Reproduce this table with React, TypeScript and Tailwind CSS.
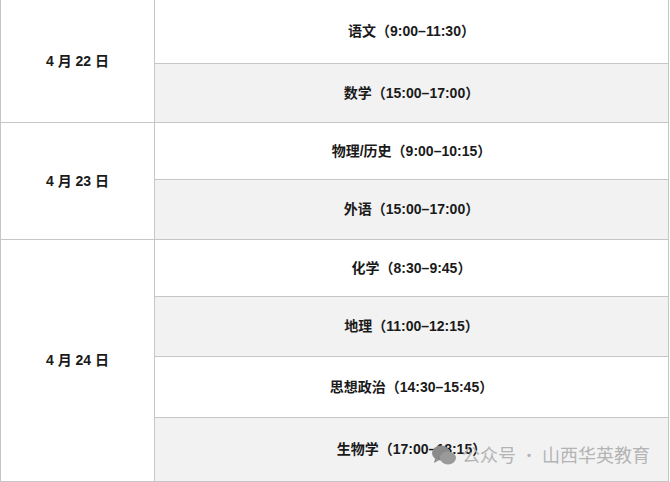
const days = [
  {
    date: '4 月 22 日',
    exams: [
      { name: '语文（9:00–11:30）', h: 'h-[64px]' },
      { name: '数学（15:00–17:00）', h: 'h-[59px]' },
    ],
  },
  {
    date: '4 月 23 日',
    exams: [
      { name: '物理/历史（9:00–10:15）', h: 'h-[57px]' },
      { name: '外语（15:00–17:00）', h: 'h-[60px]' },
    ],
  },
  {
    date: '4 月 24 日',
    exams: [
      { name: '化学（8:30–9:45）', h: 'h-[57px]' },
      { name: '地理（11:00–12:15）', h: 'h-[60px]' },
      { name: '思想政治（14:30–15:45）', h: 'h-[61px]' },
      { name: '生物学（17:00–18:15）', h: 'h-[64px]' },
    ],
  },
];

export default function App() {
  let row = 0;
  return (
    <div className="relative w-[670px] h-[482px] overflow-hidden bg-white font-['Liberation_Sans','Noto_Sans_CJK_SC',sans-serif] text-[14px] text-[#1a1a1a]">
      <table className="w-[669px] -mt-px border-collapse table-fixed">
        <colgroup>
          <col className="w-[154px]" />
          <col />
        </colgroup>
        <tbody>
          {days.map((day) =>
            day.exams.map((exam, i) => {
              const even = row++ % 2 === 1;
              return (
                <tr key={exam.name} className={exam.h}>
                  {i === 0 && (
                    <td
                      rowSpan={day.exams.length}
                      className="border border-[#c6c6c6] bg-white text-center align-middle font-semibold"
                    >
                      {day.date}
                    </td>
                  )}
                  <td
                    className={`border border-[#c6c6c6] text-center align-middle font-semibold ${
                      even ? 'bg-[#f2f2f2]' : 'bg-white'
                    }`}
                  >
                    {exam.name}
                  </td>
                </tr>
              );
            })
          )}
        </tbody>
      </table>

      <div className="absolute left-[431px] top-[441px] flex items-center gap-[5px] text-[18px] text-[#b4b4b4] font-['Noto_Sans_CJK_SC',sans-serif]">
        <svg width="26" height="22" viewBox="0 0 26 22">
          <ellipse cx="10" cy="9" rx="9" ry="7.5" fill="#8a8a8a" />
          <ellipse cx="17" cy="14" rx="8" ry="6.5" fill="#9a9a9a" />
          <path d="M4 15 L3 19 L8 16 Z" fill="#8a8a8a" />
        </svg>
        <span>公众号<span className="font-light"> · </span>山西华英教育</span>
      </div>
    </div>
  );
}
